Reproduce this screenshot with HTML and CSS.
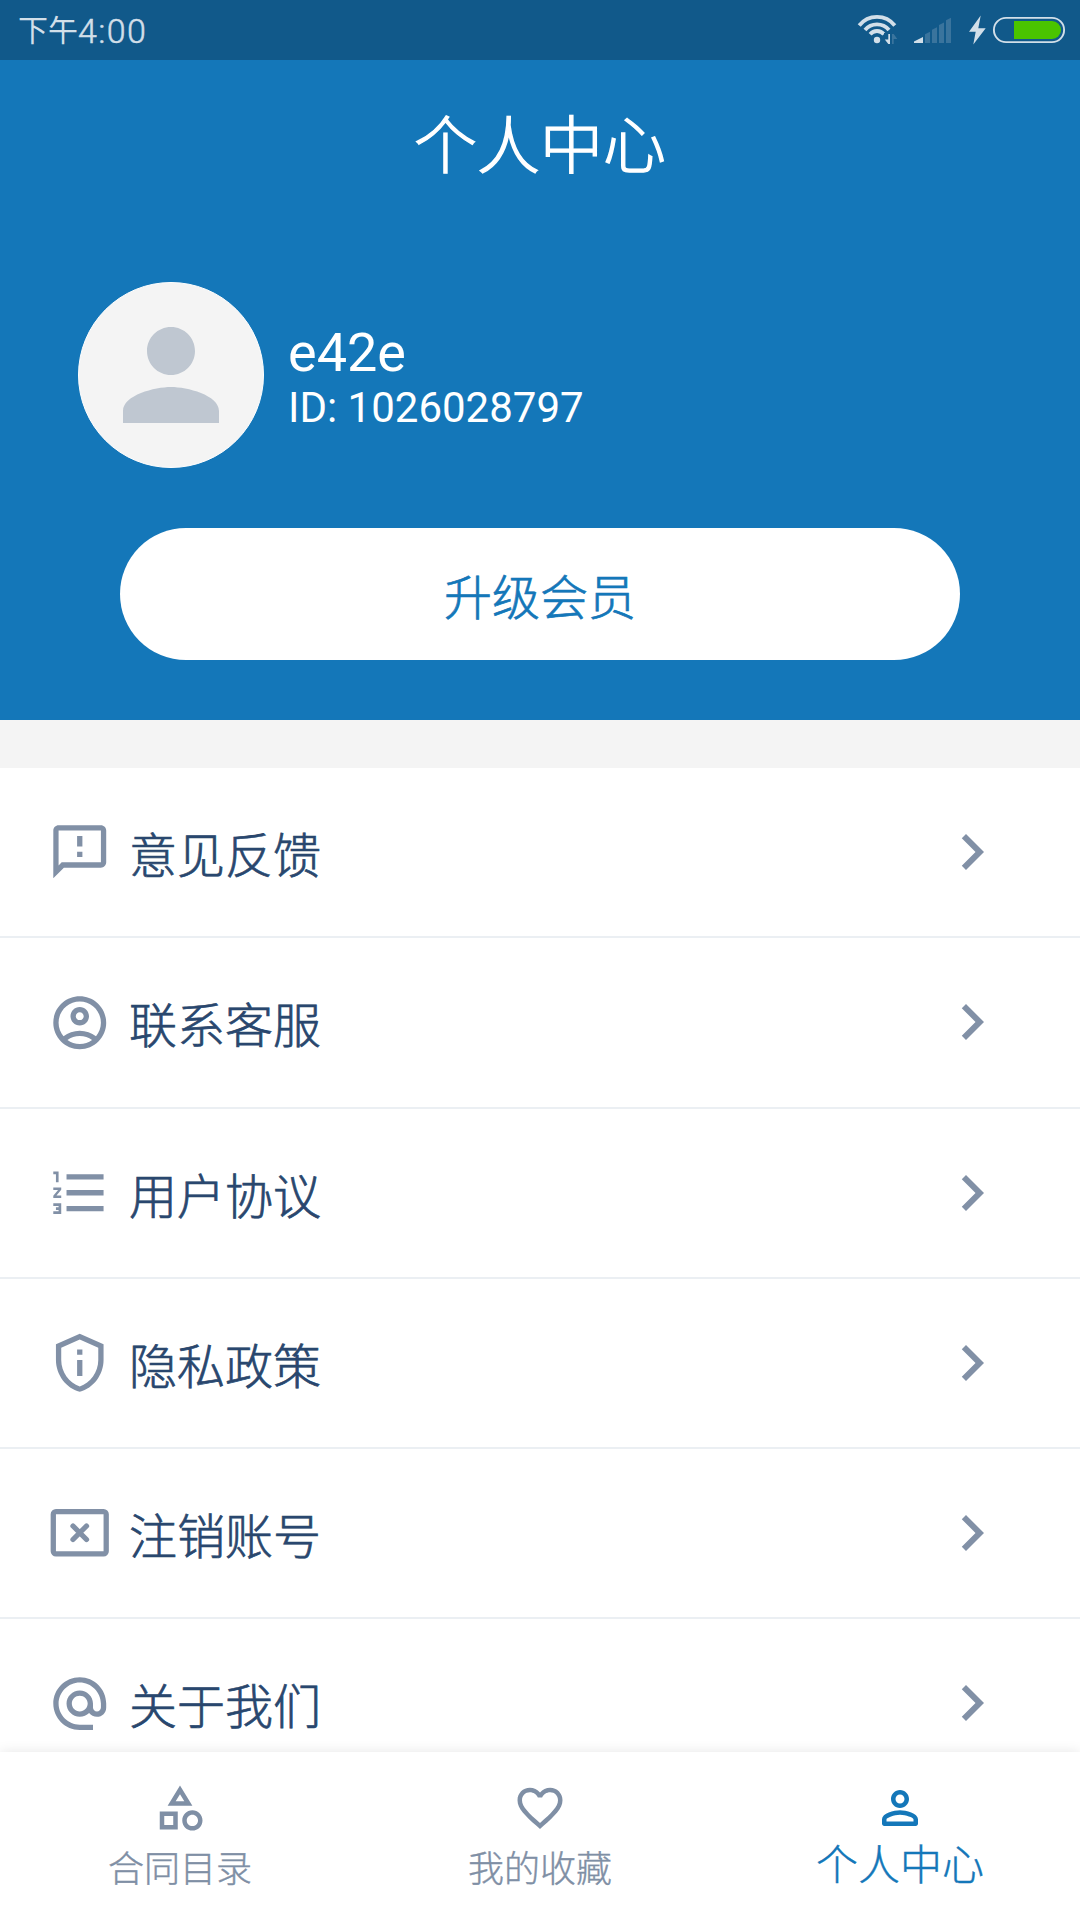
FILE: index.html
```html
<!DOCTYPE html>
<html lang="zh-CN">
  <head>
    <meta charset="UTF-8" />
    <meta name="viewport" content="width=device-width, initial-scale=1.0" />
    <title>个人中心</title>
    <link rel="stylesheet" href="styles.css">
  </head>
  <body>
    <div class="app">
      <div class="status-bar">
        <div class="clock">下午<span class="clock-digits">4:00</span></div>
        <svg class="status-icons" viewBox="0 0 240 60">
          <!-- wifi -->
          <g class="line">
            <path d="M19.2 25.5a22.6 22.6 0 0 1 35.6 0" />
            <path d="M25 30a15.6 15.6 0 0 1 24 0" />
            <path d="M30.1 34.2a9 9 0 0 1 13.8 0" />
          </g>
          <circle cx="37" cy="40" r="3.2" />
          <path class="gap" d="M44 33h14v11H44z" />
          <path d="M48.3 34h1.7v10h-1.7l-3.5-4.5h3.5z" />
          <path class="dim" d="M52 34h1.7l3.6 5h-3.6v5H52z" />
          <!-- signal -->
          <path d="M74 43v-1.6l9-4.4v6z" />
          <path class="dim" d="M85 43v-8.7l5-2.5V43zM92 43V29.7l5-2.5V43zM99 43V25l5-2.4V43zM106 43V20.3l5-2.5V43z" />
          <!-- battery -->
          <path d="M140.7 15.5L129 31.7h6.7l-2.4 12.8 12.4-16.2h-7.4z" />
          <rect class="shell" x="153.9" y="17.9" width="70.2" height="24.2" rx="12.1" />
          <path class="charge" d="M174 21h38a9 9 0 0 1 0 18h-38z" />
        </svg>
      </div>

      <header class="header">
        <h1>个人中心</h1>
        <div class="profile">
          <div class="avatar">
            <svg viewBox="0 0 24 24"><path d="M12 12c2.21 0 4-1.79 4-4s-1.79-4-4-4-4 1.79-4 4 1.79 4 4 4zm0 2c-2.67 0-8 1.34-8 4v2h16v-2c0-2.66-5.33-4-8-4z" /></svg>
          </div>
          <div class="profile-info">
            <div class="profile-name">e42e</div>
            <div class="profile-id">ID: 1026028797</div>
          </div>
        </div>
        <button type="button" class="upgrade">升级会员</button>
      </header>

      <main class="menu">
        <a class="menu-item">
          <svg class="menu-icon" viewBox="0 0 24 24"><path d="M20 2H4c-1.1 0-1.99.9-1.99 2L2 22l4-4h14c1.1 0 2-.9 2-2V4c0-1.1-.9-2-2-2zm0 14H5.17L4 17.17V4h16v12zm-9-4h2v2h-2v-2zm0-6h2v4h-2V6z" /></svg>
          <span>意见反馈</span>
          <svg class="chevron" viewBox="0 0 24 24"><path d="M10 6L8.59 7.41 13.17 12l-4.58 4.59L10 18l6-6z" /></svg>
        </a>
        <a class="menu-item">
          <svg class="menu-icon" viewBox="0 0 24 24"><path d="M12 2C6.48 2 2 6.48 2 12s4.48 10 10 10 10-4.48 10-10S17.52 2 12 2zM7.35 18.5C8.66 17.56 10.26 17 12 17s3.34.56 4.65 1.5C15.34 19.44 13.74 20 12 20s-3.34-.56-4.65-1.5zm10.79-1.38C16.45 15.8 14.32 15 12 15s-4.45.8-6.14 2.12C4.7 15.73 4 13.95 4 12c0-4.42 3.58-8 8-8s8 3.58 8 8c0 1.95-.7 3.73-1.86 5.12z" /><path d="M12 6c-1.93 0-3.5 1.57-3.5 3.5S10.07 13 12 13s3.5-1.57 3.5-3.5S13.93 6 12 6zm0 5c-.83 0-1.5-.67-1.5-1.5S11.17 8 12 8s1.5.67 1.5 1.5S12.83 11 12 11z" /></svg>
          <span>联系客服</span>
          <svg class="chevron" viewBox="0 0 24 24"><path d="M10 6L8.59 7.41 13.17 12l-4.58 4.59L10 18l6-6z" /></svg>
        </a>
        <a class="menu-item">
          <svg class="menu-icon" viewBox="0 0 24 24"><path d="M2 17h2v.5H3v1h1v.5H2v1h3v-4H2v1zm1-9h1V4H2v1h1v3zm-1 3h1.8L2 13.1v.9h3v-1H3.2L5 10.9V10H2v1zm5-6v2h14V5H7zm0 14h14v-2H7v2zm0-6h14v-2H7v2z" /></svg>
          <span>用户协议</span>
          <svg class="chevron" viewBox="0 0 24 24"><path d="M10 6L8.59 7.41 13.17 12l-4.58 4.59L10 18l6-6z" /></svg>
        </a>
        <a class="menu-item">
          <svg class="menu-icon" viewBox="0 0 24 24"><path d="M12 1L3 5v6c0 5.55 3.84 10.74 9 12 5.16-1.26 9-6.45 9-12V5l-9-4zm7 10c0 4.52-2.98 8.69-7 9.93-4.02-1.24-7-5.41-7-9.93V6.3l7-3.11 7 3.11V11zm-8 0h2v6h-2v-6zm0-4h2v2h-2V7z" /></svg>
          <span>隐私政策</span>
          <svg class="chevron" viewBox="0 0 24 24"><path d="M10 6L8.59 7.41 13.17 12l-4.58 4.59L10 18l6-6z" /></svg>
        </a>
        <a class="menu-item">
          <svg class="menu-icon outlined" viewBox="0 0 24 24"><rect x="2" y="4.05" width="20" height="15.9" rx="1" /><path d="M9.45 9.45l5.1 5.1M14.55 9.45l-5.1 5.1" /></svg>
          <span>注销账号</span>
          <svg class="chevron" viewBox="0 0 24 24"><path d="M10 6L8.59 7.41 13.17 12l-4.58 4.59L10 18l6-6z" /></svg>
        </a>
        <a class="menu-item">
          <svg class="menu-icon" viewBox="0 0 24 24"><path d="M12 1.95c-5.52 0-10 4.48-10 10s4.48 10 10 10h5v-2h-5c-4.34 0-8-3.66-8-8s3.66-8 8-8 8 3.66 8 8v1.43c0 .79-.71 1.57-1.5 1.57s-1.5-.78-1.5-1.57v-1.43c0-2.76-2.24-5-5-5s-5 2.24-5 5 2.24 5 5 5c1.38 0 2.64-.56 3.54-1.47.65.89 1.77 1.47 2.96 1.47 1.97 0 3.5-1.6 3.5-3.57v-1.43c0-5.52-4.48-10-10-10zm0 13c-1.66 0-3-1.34-3-3s1.34-3 3-3 3 1.34 3 3-1.34 3-3 3z" /></svg>
          <span>关于我们</span>
          <svg class="chevron" viewBox="0 0 24 24"><path d="M10 6L8.59 7.41 13.17 12l-4.58 4.59L10 18l6-6z" /></svg>
        </a>
      </main>

      <nav class="tab-bar">
        <a class="tab">
          <svg viewBox="0 0 24 24"><path d="M12 2l-5.5 9h11L12 2zm0 3.84L13.93 9h-3.87L12 5.84zM17.5 13c-2.49 0-4.5 2.01-4.5 4.5s2.01 4.5 4.5 4.5 4.5-2.01 4.5-4.5-2.01-4.5-4.5-4.5zm0 7c-1.38 0-2.5-1.12-2.5-2.5s1.12-2.5 2.5-2.5 2.5 1.12 2.5 2.5-1.12 2.5-2.5 2.5zM3 21.5h8v-8H3v8zm2-6h4v4H5v-4z" /></svg>
          <span>合同目录</span>
        </a>
        <a class="tab">
          <svg viewBox="0 0 24 24"><path d="M16.5 3c-1.74 0-3.41.81-4.5 2.09C10.91 3.81 9.24 3 7.5 3 4.42 3 2 5.42 2 8.5c0 3.78 3.4 6.86 8.55 11.54L12 21.35l1.45-1.32C18.6 15.36 22 12.28 22 8.5 22 5.42 19.58 3 16.5 3zm-4.4 15.55l-.1.1-.1-.1C7.14 14.24 4 11.39 4 8.5 4 6.5 5.5 5 7.5 5c1.54 0 3.04.99 3.57 2.36h1.87C13.46 5.99 14.96 5 16.5 5c2 0 3.5 1.5 3.5 3.5 0 2.89-3.14 5.74-7.9 10.05z" /></svg>
          <span>我的收藏</span>
        </a>
        <a class="tab active">
          <svg viewBox="0 0 24 24"><path d="M12 6c1.1 0 2 .9 2 2s-.9 2-2 2-2-.9-2-2 .9-2 2-2m0-2C9.79 4 8 5.79 8 8s1.79 4 4 4 4-1.79 4-4-1.79-4-4-4zm0 9c-2.67 0-8 1.34-8 4v2c0 .55.45 1 1 1h14c.55 0 1-.45 1-1v-2c0-2.66-5.33-4-8-4zm6 5H6v-.99c.2-.72 3.3-2.01 6-2.01s5.8 1.29 6 2v1z" /></svg>
          <span>个人中心</span>
        </a>
      </nav>
    </div>
  </body>
</html>
```

FILE: styles.css
```css
*,
*::before,
*::after {
  margin: 0;
  padding: 0;
  box-sizing: border-box;
}

html,
body {
  width: 100%;
  height: 100%;
  font-family: Roboto, "Noto Sans CJK SC", sans-serif;
  background-color: #f4f4f4;
}

svg {
  display: block;
  flex: none;
  fill: currentColor;
}

.app {
  display: flex;
  flex-direction: column;
  height: 1920px;
  overflow: hidden;
}

/* status bar */
.status-bar {
  display: flex;
  flex: none;
  align-items: center;
  justify-content: space-between;
  height: 60px;
  padding-left: 18px;
  background-color: #11598a;
  color: #d2dfe9;
}

.clock {
  display: flex;
  align-items: center;
  padding-top: 2px;
  font-size: 30px;
  font-weight: 400;
  line-height: 60px;
}

.clock-digits {
  font-size: 34px;
  font-weight: 300;
  letter-spacing: 1.4px;
  -webkit-text-stroke: 0.5px currentColor;
}

.status-icons {
  width: 240px;
  height: 60px;
}

.status-icons .line {
  fill: none;
  stroke: currentColor;
  stroke-width: 3.8;
}

.status-icons .gap {
  fill: #11598a;
}

.status-icons .dim {
  fill: #3a749d;
}

.status-icons .shell {
  fill: none;
  stroke: currentColor;
  stroke-width: 1.9;
}

.status-icons .charge {
  fill: #4ac400;
}

/* header */
.header {
  display: flex;
  flex: none;
  flex-direction: column;
  height: 660px;
  background-color: #1477b9;
  color: #fff;
}

.header h1 {
  height: 168px;
  padding-top: 3px;
  font-size: 63px;
  font-weight: 300;
  line-height: 168px;
  text-align: center;
  -webkit-text-stroke: 1.3px currentColor;
}

.profile {
  display: flex;
  align-items: center;
  gap: 24px;
  margin-top: 54px;
  padding-left: 78px;
}

.avatar {
  display: flex;
  align-items: center;
  justify-content: center;
  width: 186px;
  height: 186px;
  border: 1px solid #fff;
  border-radius: 50%;
  background-color: #f4f4f4;
  color: #bfc7d1;
}

.avatar svg {
  width: 144px;
  height: 144px;
}

.profile-info {
  padding-top: 3px;
}

.profile-name {
  font-size: 54px;
  line-height: 63px;
}

.profile-id {
  font-size: 42px;
  line-height: 48px;
}

.upgrade {
  height: 132px;
  margin: 60px 120px 0;
  border: none;
  border-radius: 66px;
  background-color: #fff;
  color: #1477b9;
  font-family: inherit;
  font-size: 48px;
  font-weight: 300;
  -webkit-text-stroke: 0.7px currentColor;
}

/* menu */
.menu {
  flex: 1;
  min-height: 0;
  margin-top: 48px;
  overflow: hidden;
  background-color: #fff;
}

.menu-item {
  display: flex;
  align-items: center;
  height: 170.25px;
  padding: 0 72px 0 47.5px;
  border-bottom: 2px solid #ebeff3;
  color: #29476e;
  font-size: 48px;
  font-weight: 300;
  -webkit-text-stroke: 0.7px currentColor;
}

.menu-icon {
  width: 63.5px;
  height: 63.5px;
  margin-right: 18px;
  color: #8190a6;
}

.outlined {
  fill: none;
  stroke: currentColor;
  stroke-width: 2;
  stroke-linecap: round;
}

.chevron {
  width: 72px;
  height: 72px;
  margin-left: auto;
  color: #8190a6;
}

/* bottom tabs */
.tab-bar {
  display: flex;
  flex: none;
  height: 168px;
  background-color: #fff;
  box-shadow: 0 0 12px rgba(0, 0, 0, 0.1);
}

.tab {
  display: flex;
  flex: 1;
  flex-direction: column;
  align-items: center;
  padding-top: 29px;
  color: #7f8fa5;
  font-size: 36px;
  font-weight: 300;
  -webkit-text-stroke: 0.4px currentColor;
}

.tab svg {
  width: 54px;
  height: 54px;
}

.tab span {
  line-height: 70px;
}

.tab.active {
  color: #1477b9;
  font-size: 42px;
}

.tab.active span {
  line-height: 62px;
}
```
